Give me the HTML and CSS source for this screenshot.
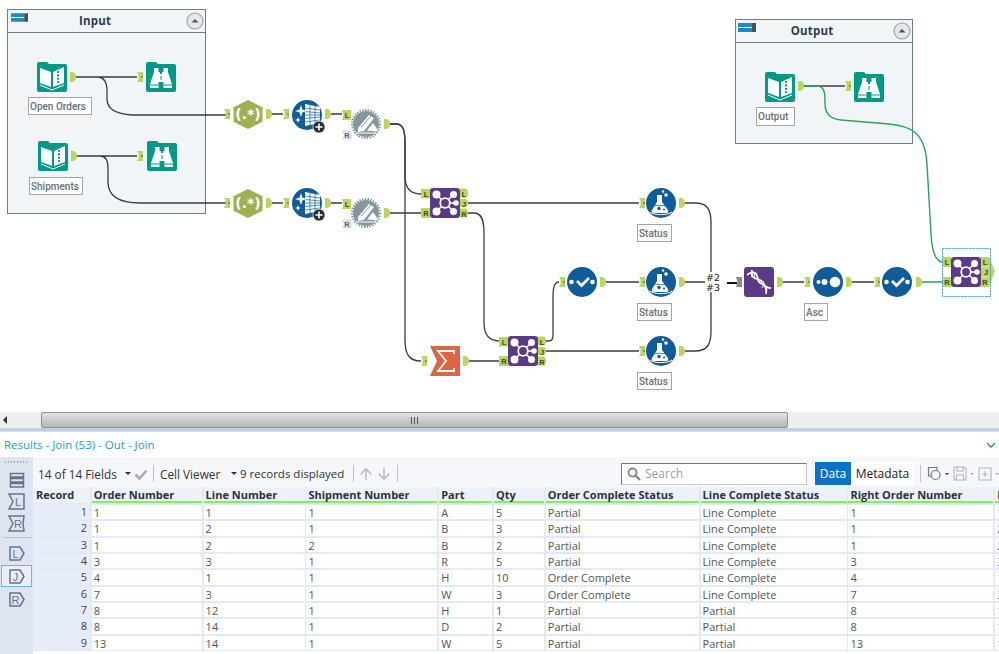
FILE: index.html
```html
<!DOCTYPE html>
<html lang="en">
<head>
<meta charset="utf-8">
<title>Results - Join (53)</title>
<link rel="stylesheet" href="styles.css">
</head>
<body>
<svg class="canvas" width="999" height="412" viewBox="0 0 999 412" xmlns="http://www.w3.org/2000/svg">
  <defs>
    <symbol id="folder" viewBox="0 0 30 30"><path class="teal" d="M2 0h8l2 2h16a2 2 0 0 1 2 2v24a2 2 0 0 1-2 2H2a2 2 0 0 1-2-2V2a2 2 0 0 1 2-2z"/></symbol>
    <symbol id="book" viewBox="0 0 30 30">
      <use href="#folder" width="30" height="30"/>
      <path class="w" d="M3 6l11 4v15L3 21zM16 10l11-5v16l-11 4z"/>
      <circle class="tealc" cx="21" cy="10" r="1.100"/><circle class="tealc" cx="21" cy="13.400" r="1.100"/><circle class="tealc" cx="21" cy="16.800" r="1.100"/><circle class="tealc" cx="21" cy="20" r="1.100"/>
      <path class="wl" d="M3 23l12 5 12-5"/>
    </symbol>
    <symbol id="browse" viewBox="0 0 30 30">
      <use href="#folder" width="30" height="30"/>
      <path class="w" d="M8 6h4.500v4H14v2h2v-2h1.500V6H22v4l4 12v4h-8.500v-6h-5v6H4v-4l4-12z"/>
      <path class="tl" d="M4 23h8.500M17.500 23H26M15 14v4"/>
    </symbol>
    <symbol id="regex" viewBox="0 0 30 30"><path class="olive" d="M15 0l15 7.500v15L15 30 0 22.500V7.500z"/></symbol>
    <symbol id="gen" viewBox="0 0 34 34">
      <circle class="blue" cx="15" cy="15" r="15"/>
      <path class="w" d="M13 4l15 3v16l-15 3z"/>
      <path class="bl" d="M13 8l15 2M13 11.500l15 1.500M13 15h15M13 18.500l15-1.500M13 22l15-2M18 5v20M23 6v18"/>
      <path class="w" d="M9 5l1.400 4.600 4.600 1.400-4.600 1.400L9 17l-1.400-4.600L3 11l4.600-1.400zM6 17l.8 2.200L9 20l-2.200.8L6 23l-.8-2.200L3 20l2.200-.8z"/>
      <circle class="dark" cx="27" cy="27" r="6"/>
      <path class="wl2" d="M27 23.500v7M23.500 27h7"/>
    </symbol>
    <symbol id="gear" viewBox="0 0 30 30">
      <circle class="gray" cx="15" cy="15" r="13"/>
      <circle class="grayd" cx="15" cy="15" r="14"/>
      <path class="w" d="M7 19L18 6l5 3-10 13-6 1zM16 21.500L22 14l5 7-2 1.500z"/>
      <path class="grl" d="M10 18l10-11"/>
      <path class="wl" d="M5 24h20"/>
    </symbol>
    <symbol id="join" viewBox="0 0 30 30">
      <rect class="purple" width="30" height="30" rx="3"/>
      <path class="wl15" d="M15 15L7 7M15 15L23 7M15 15L7 23M15 15L23 23M15 15h11"/>
      <circle class="w" cx="6.500" cy="6.500" r="4"/><circle class="w" cx="23.500" cy="6.500" r="3.500"/><circle class="w" cx="6.500" cy="23.500" r="4"/><circle class="w" cx="23.500" cy="23.500" r="3.500"/><circle class="w" cx="26" cy="15" r="2.800"/>
      <circle class="ring" cx="15" cy="15" r="4.800"/>
    </symbol>
    <symbol id="sum" viewBox="0 0 30 30">
      <path class="coral" d="M0 0h30v30H0l7-15z"/>
      <path class="sig" d="M24 8V5H8l8 10-8 10h16v-3"/>
    </symbol>
    <symbol id="check" viewBox="0 0 30 30">
      <circle class="blue" cx="15" cy="15" r="15"/>
      <circle class="w" cx="4.500" cy="15" r="2.300"/><circle class="w" cx="25.500" cy="15" r="2.300"/>
      <path class="wl3" d="M10 14l4.500 4.500 7.500-7.500"/>
    </symbol>
    <symbol id="flask" viewBox="0 0 30 30">
      <circle class="blue" cx="15" cy="15" r="15"/>
      <circle class="w" cx="17" cy="3.500" r="1.200"/><circle class="w" cx="20" cy="7" r="1.800"/>
      <path class="w" d="M11 7h5v7l6 8a2 2 0 0 1-2 3H8a2 2 0 0 1-2-3l5-8z"/>
      <path class="bl2" d="M9 17.500c3-1 6 1 10 0"/>
      <circle class="blue" cx="13" cy="20.500" r="1.700"/><circle class="blue" cx="18" cy="21.500" r="1"/>
      <path class="wl" d="M4 24c3 3.500 18 3.500 22 0"/>
    </symbol>
    <symbol id="dna" viewBox="0 0 30 30">
      <rect class="purple" width="30" height="30" rx="3"/>
      <path class="dn" d="M3 8c5-4 9-3 10 1s1 6 5 8 5 5 4 10"/>
      <path class="dn" d="M8 3c-1 5 1 8 5 9s6 2 7 5 3 4 7 4"/>
      <path class="wl" d="M7 5.500l1 5M11 6l-1 5M14 10.500l1.500 4M17.500 13l-3 3M20 17l-2 4M24 19l-2 4"/>
    </symbol>
    <symbol id="sort" viewBox="0 0 30 30">
      <circle class="blue" cx="15" cy="15" r="15"/>
      <circle class="w" cx="5.500" cy="15" r="2"/><circle class="w" cx="11.500" cy="15" r="3"/><circle class="w" cx="22" cy="15" r="5.300"/>
    </symbol>
    <symbol id="out" viewBox="0 0 6 10"><path class="anchor" d="M0 0h2a4 5 0 0 1 4 5 4 5 0 0 1-4 5H0z"/></symbol>
    <symbol id="inp" viewBox="0 0 6 10"><path class="anchor" d="M0 0h6v10H0l1.500-2.500V2.500z"/><path class="notch" d="M4 5H6"/></symbol>
    <symbol id="handle" viewBox="0 0 18 9"><rect class="hblue" width="14" height="9"/><path class="hline" d="M0 4.500h14"/><rect class="hdark" x="14" width="4" height="9"/></symbol>
    <symbol id="collapse" viewBox="0 0 18 18">
      <circle class="cbtn" cx="9" cy="9" r="8"/><path class="carrow" d="M5.500 10.500L9 7l3.500 3.500z"/>
    </symbol>
  </defs>

  <g class="container">
    <rect x="7.500" y="9.500" width="198" height="204"/><path d="M7.500 32.500h198"/>
  </g>
  <text class="ctitle" x="95" y="25" text-anchor="middle">Input</text>
  <use href="#handle" x="11" y="13" width="17" height="9"/>
  <use href="#collapse" x="186" y="12" width="18" height="18"/>

  <g class="container">
    <rect x="735.500" y="19.500" width="177" height="124"/><path d="M735.500 42.500h177"/>
  </g>
  <text class="ctitle" x="812" y="35" text-anchor="middle">Output</text>
  <use href="#handle" x="738" y="23" width="18" height="9"/>
  <use href="#collapse" x="893" y="22" width="18" height="18"/>

  <g class="wires">
    <path d="M75 77h62M75 77h22c7 0 10 6 10 14v8c0 10 8 15 25 16h94"/>
    <path d="M76 156h61M76 156h24c6 0 8 5 8 12v14c0 12 8 21 32 21h86"/>
    <path d="M272 114h11M272 203h11M331 114h11M331 203h11"/>
    <path d="M390 124h6c8 0 9 8 9 20V340c0 14 4 21 16 21"/>
    <path d="M390 124h6c8 0 9 8 9 20v32c0 12 5 18 16 18"/>
    <path d="M390 213h31M468 203h171M468 213h6c8 0 10 8 10 20v90c0 12 6 18 16 18"/>
    <path d="M469 361h31M546 351h93M546 341h3c5 0 4-6 4-12v-33c0-10 2-14 6-14"/>
    <path d="M606 282h33M685 203h10c12 0 16 6 16 20v52M685 282h20M685 351h10c12 0 16-6 16-20v-41"/>
    <path d="M783 282h21M852 282h22"/>
    <path class="thick" d="M727 283h10"/>
    <path d="M803 86h42"/>
    <path class="green" d="M803 86h14c8 0 8 8 8 18 0 10 6 15 16 16l48 4c24 2 36 10 38 40l4 70c1 18 5 28 12 28M922 282h21"/>
  </g>

  <use href="#book" x="37" y="62" width="30" height="30"/>
  <use href="#browse" x="146" y="62" width="30" height="30"/>
  <use href="#book" x="38" y="141" width="30" height="30"/>
  <use href="#browse" x="147" y="141" width="30" height="30"/>
  <use href="#book" x="765" y="72" width="30" height="30"/>
  <use href="#browse" x="854" y="72" width="30" height="30"/>

  <use href="#out" x="70" y="72" width="6" height="10"/><use href="#inp" x="137" y="72" width="6" height="10"/>
  <use href="#out" x="71" y="151" width="6" height="10"/><use href="#inp" x="137" y="151" width="6" height="10"/>
  <use href="#out" x="798" y="81" width="6" height="10"/><use href="#inp" x="845" y="81" width="6" height="10"/>

  <rect class="lbl" x="28.500" y="97.500" width="63" height="17"/><text class="lt" x="30" y="110">Open Orders</text>
  <rect class="lbl" x="29.500" y="177.500" width="53" height="17"/><text class="lt" x="31" y="190">Shipments</text>
  <rect class="lbl" x="756.500" y="107.500" width="38" height="18"/><text class="lt" x="758" y="120">Output</text>
  <rect class="lbl" x="637.500" y="224.500" width="34" height="17"/><text class="lt" x="639" y="237">Status</text>
  <rect class="lbl" x="637.500" y="303.500" width="34" height="17"/><text class="lt" x="639" y="316">Status</text>
  <rect class="lbl" x="637.500" y="372.500" width="34" height="17"/><text class="lt" x="639" y="385">Status</text>
  <rect class="lbl" x="804.500" y="303.500" width="23" height="17"/><text class="lt" x="806" y="316">Asc</text>

  <use href="#inp" x="224" y="109" width="6" height="10"/>
  <use href="#regex" x="233" y="100" width="30" height="29"/><text class="rx" x="248" y="119" text-anchor="middle">(.*)</text>
  <use href="#out" x="266" y="109" width="6" height="10"/>
  <use href="#inp" x="283" y="109" width="6" height="10"/>
  <use href="#gen" x="292" y="100" width="34" height="34"/>
  <use href="#out" x="325" y="109" width="6" height="10"/>
  <use href="#inp" x="224" y="198" width="6" height="10"/>
  <use href="#regex" x="233" y="189" width="30" height="29"/><text class="rx" x="248" y="208" text-anchor="middle">(.*)</text>
  <use href="#out" x="266" y="198" width="6" height="10"/>
  <use href="#inp" x="283" y="198" width="6" height="10"/>
  <use href="#gen" x="292" y="188" width="34" height="34"/>
  <use href="#out" x="325" y="198" width="6" height="10"/>

  <use href="#gear" x="351" y="109" width="30" height="30"/>
  <use href="#gear" x="351" y="198" width="30" height="30"/>
  <use href="#out" x="384" y="119" width="6" height="10"/>
  <use href="#out" x="384" y="208" width="6" height="10"/>
  <path class="anchor" d="M342 110h9v10h-9l1.500-5z"/><text class="pl" x="347" y="118" text-anchor="middle">L</text>
  <path class="anchorw" d="M343 131h8v8h-8l1.500-4z"/><text class="pr" x="347" y="138" text-anchor="middle">R</text>
  <path class="anchor" d="M342 199h9v10h-9l1.500-5z"/><text class="pl" x="347" y="207" text-anchor="middle">L</text>
  <path class="anchorw" d="M343 220h8v8h-8l1.500-4z"/><text class="pr" x="347" y="227" text-anchor="middle">R</text>

  <g>
    <use href="#join" x="430" y="188" width="30" height="30"/>
    <path class="anchor" d="M421 189h9v9.500h-9zM421 208h9v10h-9z"/>
    <text class="pl" x="426" y="197" text-anchor="middle">L</text><text class="pl" x="426" y="216" text-anchor="middle">R</text>
    <path class="anchor" d="M460 188.500h5a3 4 0 0 1 3 4.500 3 4 0 0 1-3 4.500h-5zM460 199h5a3 4 0 0 1 3 4 3 4 0 0 1-3 4h-5zM460 208.500h5a3 4 0 0 1 3 4.500 3 4 0 0 1-3 4.500h-5z"/>
    <text class="pl" x="464" y="196.500" text-anchor="middle">L</text><text class="pl" x="464" y="207" text-anchor="middle">J</text><text class="pl" x="464" y="216.500" text-anchor="middle">R</text>
  </g>
  <g>
    <use href="#join" x="508" y="336" width="30" height="30"/>
    <path class="anchor" d="M499 337h9v9.500h-9zM499 356h9v10h-9z"/>
    <text class="pl" x="504" y="345" text-anchor="middle">L</text><text class="pl" x="504" y="364" text-anchor="middle">R</text>
    <path class="anchor" d="M538 336.500h5a3 4 0 0 1 3 4.500 3 4 0 0 1-3 4.500h-5zM538 347h5a3 4 0 0 1 3 4 3 4 0 0 1-3 4h-5zM538 356.500h5a3 4 0 0 1 3 4.500 3 4 0 0 1-3 4.500h-5z"/>
    <text class="pl" x="542" y="344.500" text-anchor="middle">L</text><text class="pl" x="542" y="355" text-anchor="middle">J</text><text class="pl" x="542" y="364.500" text-anchor="middle">R</text>
  </g>
  <g>
    <use href="#join" x="951" y="257" width="30" height="30"/>
    <path class="anchor" d="M943 257h8v10h-8zM943 277h8v10h-8z"/>
    <text class="pl" x="947" y="265" text-anchor="middle">L</text><text class="pl" x="947" y="285" text-anchor="middle">R</text>
    <path class="anchor" d="M981 257h8l6 14-6 16h-8z"/>
    <path class="sep" d="M981 267h8M981 277h8"/>
    <text class="pl" x="985" y="265" text-anchor="middle">L</text><text class="pl" x="986" y="275" text-anchor="middle">J</text><text class="pl" x="985" y="285" text-anchor="middle">R</text>
    <rect class="sel" x="942.500" y="248.500" width="48" height="48"/>
  </g>

  <use href="#inp" x="421" y="356" width="6" height="10"/>
  <use href="#sum" x="430" y="346" width="30" height="30"/>
  <use href="#out" x="463" y="356" width="6" height="10"/>

  <use href="#inp" x="559" y="277" width="6" height="10"/>
  <use href="#check" x="567" y="267" width="30" height="30"/>
  <use href="#out" x="600" y="277" width="6" height="10"/>

  <use href="#inp" x="639" y="198" width="6" height="10"/><use href="#flask" x="646" y="188" width="30" height="30"/><use href="#out" x="679" y="198" width="6" height="10"/>
  <use href="#inp" x="639" y="277" width="6" height="10"/><use href="#flask" x="646" y="267" width="30" height="30"/><use href="#out" x="679" y="277" width="6" height="10"/>
  <use href="#inp" x="639" y="346" width="6" height="10"/><use href="#flask" x="646" y="336" width="30" height="30"/><use href="#out" x="679" y="346" width="6" height="10"/>

  <rect class="wirelbl" x="705" y="272" width="16" height="20"/>
  <text class="wl-t" x="713" y="281" text-anchor="middle">#2</text>
  <text class="wl-t" x="713" y="291" text-anchor="middle">#3</text>
  <path class="multi" d="M736 277h6v10h-6l1.500-5z"/>
  <use href="#dna" x="744" y="267" width="30" height="30"/>
  <use href="#out" x="777" y="277" width="6" height="10"/>
  <use href="#inp" x="804" y="277" width="6" height="10"/>
  <use href="#sort" x="813" y="267" width="30" height="30"/>
  <use href="#out" x="846" y="277" width="6" height="10"/>
  <use href="#inp" x="874" y="277" width="6" height="10"/>
  <use href="#check" x="882" y="267" width="30" height="30"/>
  <use href="#out" x="916" y="277" width="6" height="10"/>
</svg>

<div class="hscroll">
  <span class="harrow"></span>
  <div class="thumb"><span class="grip"></span></div>
</div>
<div class="divider"></div>
<div class="rhead">
  <span class="rtitle">Results - Join (53) - Out - Join</span>
  <svg class="chev" width="10" height="6" viewBox="0 0 10 6"><path d="M1 1l4 4 4-4"/></svg>
</div>
<div class="panel">
  <aside class="side">
    <div class="gripdots"></div>
    <div class="sbtn s1"><svg width="16" height="16" viewBox="0 0 16 16"><path class="sico" d="M1.500 1.500h13v3.500h-13zM1.500 6.500h13v3.500h-13zM1.500 11.500h13v3.500h-13z"/></svg></div>
    <div class="sbtn s2"><svg width="17" height="17" viewBox="0 0 17 17"><path class="sico" d="M1 1h15v15H1l4-7.500z"/><text class="stx" x="10" y="13" text-anchor="middle">L</text></svg></div>
    <div class="sbtn s2"><svg width="17" height="17" viewBox="0 0 17 17"><path class="sico" d="M1 1h15l-1 7.500 1 7.500H1l4-7.500z"/><text class="stx" x="10" y="13" text-anchor="middle">R</text></svg></div>
    <div class="ssep"></div>
    <div class="sbtn s3"><svg width="16" height="15" viewBox="0 0 16 15"><path class="sico" d="M1 1h10l4 6.500-4 6.500H1z"/><text class="stx" x="6.500" y="11.500" text-anchor="middle">L</text></svg></div>
    <div class="sbtn s3 on"><svg width="16" height="15" viewBox="0 0 16 15"><path class="sico" d="M1 1h10l4 6.500-4 6.500H1z"/><text class="stx" x="6.500" y="11.500" text-anchor="middle">J</text></svg></div>
    <div class="sbtn s3"><svg width="16" height="15" viewBox="0 0 16 15"><path class="sico" d="M1 1h10l4 6.500-4 6.500H1z"/><text class="stx" x="6.500" y="11.500" text-anchor="middle">R</text></svg></div>
  </aside>
  <main class="main">
    <div class="toolbar">
      <span class="tt t1">14 of 14 Fields</span>
      <span class="drop d1"></span>
      <svg class="tchk" width="14" height="12" viewBox="0 0 14 12"><path d="M1.500 6.500l4 4 7-8"/></svg>
      <span class="tsep s1a"></span>
      <span class="tt t2">Cell Viewer</span>
      <span class="drop d2"></span>
      <span class="tt t3">9 records displayed</span>
      <span class="tsep s2a"></span>
      <svg class="tarr a1" width="14" height="14" viewBox="0 0 14 14"><path d="M7 13V2M1.500 7.500L7 2l5.500 5.500"/></svg>
      <svg class="tarr a2" width="14" height="14" viewBox="0 0 14 14"><path d="M7 1v11M1.500 6.500L7 12l5.500-5.500"/></svg>
      <span class="tsep s3a"></span>
      <div class="search">
        <svg width="14" height="14" viewBox="0 0 14 14"><circle class="mg" cx="5.500" cy="5.500" r="4"/><path class="mgl" d="M8.500 8.500l4.500 4.500"/></svg>
        <span>Search</span>
      </div>
      <div class="tabs"><span class="tab act">Data</span><span class="tab">Metadata</span></div>
      <span class="tsep s4a"></span>
      <svg class="tico" width="15" height="15" viewBox="0 0 15 15"><path class="ti1" d="M4 10H1.500V1.500H10V4"/><circle class="ti1" cx="8.500" cy="9" r="4.500"/></svg><span class="drop sm"></span>
      <svg class="tico g2" width="14" height="15" viewBox="0 0 14 15"><path class="ti2" d="M1 1h10l2 2v11H1zM4 1v4h6V1M3.500 14V9h7v5"/></svg><span class="drop sm lt2"></span>
      <svg class="tico g2" width="14" height="14" viewBox="0 0 14 14"><path class="ti2" d="M1 1h12v12H1zM7 4v6M4 7h6"/></svg><span class="drop sm lt2"></span>
    </div>
    <div class="grid">
      <div class="hc first">Record</div><div class="hc gr">Order Number</div><div class="hc gr">Line Number</div><div class="hc gr">Shipment Number</div><div class="hc gr">Part</div><div class="hc gr">Qty</div><div class="hc gr">Order Complete Status</div><div class="hc gr">Line Complete Status</div><div class="hc gr">Right Order Number</div><div class="hc gr">Right Line Number</div>

      <div class="rn">1</div><div class="c">1</div><div class="c">1</div><div class="c">1</div><div class="c">A</div><div class="c">5</div><div class="c">Partial</div><div class="c">Line Complete</div><div class="c">1</div><div class="c">1</div>
      <div class="rn">2</div><div class="c">1</div><div class="c">2</div><div class="c">1</div><div class="c">B</div><div class="c">3</div><div class="c">Partial</div><div class="c">Line Complete</div><div class="c">1</div><div class="c">2</div>
      <div class="rn">3</div><div class="c">1</div><div class="c">2</div><div class="c">2</div><div class="c">B</div><div class="c">2</div><div class="c">Partial</div><div class="c">Line Complete</div><div class="c">1</div><div class="c">2</div>
      <div class="rn">4</div><div class="c">3</div><div class="c">3</div><div class="c">1</div><div class="c">R</div><div class="c">5</div><div class="c">Partial</div><div class="c">Line Complete</div><div class="c">3</div><div class="c">3</div>
      <div class="rn">5</div><div class="c">4</div><div class="c">1</div><div class="c">1</div><div class="c">H</div><div class="c">10</div><div class="c">Order Complete</div><div class="c">Line Complete</div><div class="c">4</div><div class="c">1</div>
      <div class="rn">6</div><div class="c">7</div><div class="c">3</div><div class="c">1</div><div class="c">W</div><div class="c">3</div><div class="c">Order Complete</div><div class="c">Line Complete</div><div class="c">7</div><div class="c">3</div>
      <div class="rn">7</div><div class="c">8</div><div class="c">12</div><div class="c">1</div><div class="c">H</div><div class="c">1</div><div class="c">Partial</div><div class="c">Partial</div><div class="c">8</div><div class="c">12</div>
      <div class="rn">8</div><div class="c">8</div><div class="c">14</div><div class="c">1</div><div class="c">D</div><div class="c">2</div><div class="c">Partial</div><div class="c">Partial</div><div class="c">8</div><div class="c">14</div>
      <div class="rn">9</div><div class="c">13</div><div class="c">14</div><div class="c">1</div><div class="c">W</div><div class="c">5</div><div class="c">Partial</div><div class="c">Partial</div><div class="c">13</div><div class="c">14</div>
    </div>
  </main>
</div>
</body>
</html>
```
FILE: styles.css
```css
* { box-sizing: border-box; }
html, body { margin: 0; padding: 0; }
body { width: 999px; height: 654px; overflow: hidden; background: #fff; font-family: "Open Sans", "Noto Sans", sans-serif; color: #333; }

.canvas { display: block; }
.teal { fill: #009a87; }
.tealc { fill: #00806f; }
.tl { fill: none; stroke: #009a87; stroke-width: 1; }
.w { fill: #fff; }
.wl { fill: none; stroke: #fff; stroke-width: 1; }
.wl15 { fill: none; stroke: #fff; stroke-width: 1.500; }
.wl2 { fill: none; stroke: #fff; stroke-width: 1.600; }
.wl3 { fill: none; stroke: #fff; stroke-width: 2.800; }
.dn { fill: none; stroke: #fff; stroke-width: 1.800; }
.olive { fill: #9eb152; }
.blue { fill: #0f5c99; }
.bl { fill: none; stroke: #0f5c99; stroke-width: .7; }
.bl2 { fill: none; stroke: #0f5c99; stroke-width: .8; }
.dark { fill: #2b2b2b; stroke: #fff; stroke-width: .6; }
.gray { fill: #84979f; }
.grayd { fill: none; stroke: #84979f; stroke-width: 2; stroke-dasharray: 1.500 1.300; }
.grl { fill: none; stroke: #84979f; stroke-width: 1; }
.purple { fill: #5b3b86; }
.ring { fill: #5b3b86; stroke: #fff; stroke-width: 1.800; }
.coral { fill: #dd6444; }
.sig { fill: none; stroke: #fff; stroke-width: 1.800; }
.anchor { fill: #b9d65f; }
.anchorw { fill: #e6e8e4; stroke: #bbb; stroke-width: .5; }
.notch { fill: none; stroke: #555; stroke-width: 1; }
.sep { fill: none; stroke: #fff; stroke-width: .6; }
.multi { fill: #8b8f86; }
.hblue { fill: #1e88c9; }
.hline { stroke: #fff; stroke-width: 1; }
.hdark { fill: #4a4f55; }
.cbtn { fill: #e4e8ec; stroke: #9aa3aa; stroke-width: 1.200; }
.carrow { fill: #4b5560; }

.container rect { fill: #f2f5f7; stroke: #6d8080; stroke-width: 1; }
.container path { fill: none; stroke: #6d8080; stroke-width: 1; }
.ctitle { font-family: "Open Sans", sans-serif; font-weight: 700; font-size: 11.500px; letter-spacing: .2px; fill: #2c3e50; }
.wires path { fill: none; stroke: #3c3c3c; stroke-width: 1.300; }
.wires .thick { stroke: #111; stroke-width: 2; }
.wires .green { stroke: #2aa55a; stroke-width: 1.400; }
.lbl { fill: #fff; stroke: #a5a5a5; stroke-width: 1; }
.lt { font-family: Roboto, sans-serif; font-size: 10px; font-weight: 500; fill: #68707c; }
.rx { font-family: "DejaVu Sans", sans-serif; font-size: 14px; font-weight: 700; fill: #fff; }
.pl { font-family: "Liberation Sans", sans-serif; font-size: 7.500px; font-weight: 700; fill: #3b4a1e; }
.pr { font-family: "Liberation Sans", sans-serif; font-size: 7.500px; font-weight: 700; fill: #3a6c9a; }
.sel { fill: none; stroke: #3c9be8; stroke-width: 1; stroke-dasharray: 2 1; }
.wirelbl { fill: #fff; }
.wl-t { font-family: "DejaVu Sans", sans-serif; font-size: 9.500px; fill: #222; }

.hscroll { position: relative; height: 16px; background: #efefef; }
.harrow { position: absolute; left: 3px; top: 4px; width: 0; height: 0; border: 4px solid transparent; border-right-color: #333; border-left: 0; }
.thumb { position: absolute; left: 41px; top: 0; width: 747px; height: 16px; border: 1px solid #8f8f8f; border-radius: 2px; background: linear-gradient(#e4e4e4, #c9c9c9 55%, #b8b8b8); display: flex; align-items: center; justify-content: center; }
.grip { width: 8px; height: 7px; background: repeating-linear-gradient(90deg, #555 0 1px, transparent 1px 3px); }
.divider { height: 4px; background: #c2cfe8; border-bottom: 1px solid #d8dde6; }
.rhead { height: 25px; display: flex; align-items: center; justify-content: space-between; padding: 0 3px 0 4px; background: #fff; }
.rtitle { font-size: 11.500px; color: #2b9ae0; }
.chev path { fill: none; stroke: #2a7fd0; stroke-width: 1.300; }

.panel { display: flex; height: 197px; background: #fff; }
.side { width: 33px; padding: 3px 0 0 1px; background: #dfe5f0; display: flex; flex-direction: column; align-items: stretch; flex: none; }
.gripdots { height: 2px; margin: 1px 4px 0; background: repeating-linear-gradient(90deg, #9aa4b5 0 1px, transparent 1px 3px); }
.sbtn { display: flex; align-items: center; justify-content: center; width: 31px; }
.s1 { height: 16px; margin-top: 9px; }
.s2 { height: 17px; margin-top: 5px; }
.s3 { height: 22px; margin-top: 0; border: 1px solid transparent; }
.s3 + .s3 { margin-top: 1px; }
.on { border-color: #6db1ee; background: #e9eef7; }
.ssep { height: 1px; margin: 5px 2px 4px; background: #b7bfcb; }
.sico { fill: none; stroke: #66738f; stroke-width: 1.500; }
.stx { font-family: "Liberation Sans", sans-serif; font-size: 11px; fill: #66738f; }

.main { flex: 1; min-width: 0; display: flex; flex-direction: column; overflow: hidden; }
.toolbar { height: 30px; display: flex; align-items: center; padding: 3px 0 0 5px; background: #f5f7fb; flex: none; }
.toolbar > * { flex: none; }
.tt { font-size: 11.800px; color: #333; white-space: nowrap; }
.t1 { width: 80px; }
.drop { width: 0; height: 0; border: 3px solid transparent; border-top-color: #333; border-bottom: 0; }
.d1 { margin: 0 3px 0 7px; }
.tchk path { fill: none; stroke: #a9adb3; stroke-width: 2.600; }
.tsep { width: 1px; height: 17px; background: #bcc2ca; }
.s1a { margin: 0 6px 0 5px; }
.t2 { width: 63px; }
.d2 { margin: 0 3px 0 8px; }
.t3 { width: 107px; font-size: 11.500px; }
.s2a { margin: 0 5px 0 6px; }
.tarr path { fill: none; stroke: #b9bec5; stroke-width: 1.600; }
.a2 { margin-left: 4px; }
.s3a { margin: 0 0 0 6px; }
.search { margin-left: 223px; width: 186px; height: 22px; background: #fff; border: 1px solid #c9c9c9; border-left-color: #777; border-top-color: #777; display: flex; align-items: center; gap: 4px; padding-left: 5px; font-size: 12px; color: #9aa0a6; }
.mg { fill: none; stroke: #808890; stroke-width: 1.800; }
.mgl { fill: none; stroke: #808890; stroke-width: 2.400; }
.tabs { margin-left: 8px; display: flex; height: 23px; background: #fff; }
.tab { display: flex; align-items: center; justify-content: center; width: 63px; font-size: 12px; color: #222; }
.act { width: 36px; background: #0c72c9; color: #fff; }
.s4a { margin: 0 6px; height: 17px; }
.ti1 { fill: none; stroke: #707780; stroke-width: 1.200; }
.ti2 { fill: none; stroke: #b0b5bc; stroke-width: 1.100; }
.sm { margin: 0 4px 0 3px; border-width: 2.500px; border-bottom: 0; }
.lt2 { border-top-color: #aab; }

.grid { display: grid; grid-template-columns: 57px 110px 101px 131px 53px 50px 153px 146px 145px 20px; grid-template-rows: 16px; grid-auto-rows: 14.350px; column-gap: 1.800px; row-gap: 2px; overflow: hidden; background: #e3e9f5; padding-bottom: 1px; flex: none; width: 966px; }
.hc { font-size: 11px; font-weight: 700; color: #2a3340; white-space: nowrap; overflow: hidden; background: #edf1f9; padding-left: 3px; line-height: 16px; }
.gr { box-shadow: inset 0 -2px 0 #86ee5c; padding-left: 2px; }
.rn { font-size: 11px; line-height: 14px; text-align: right; padding-right: 3px; color: #444; background: #e6ecf8; }
.c { font-size: 11px; line-height: 15px; padding-left: 2px; background: #fff; color: #555; white-space: nowrap; overflow: hidden; }
```
